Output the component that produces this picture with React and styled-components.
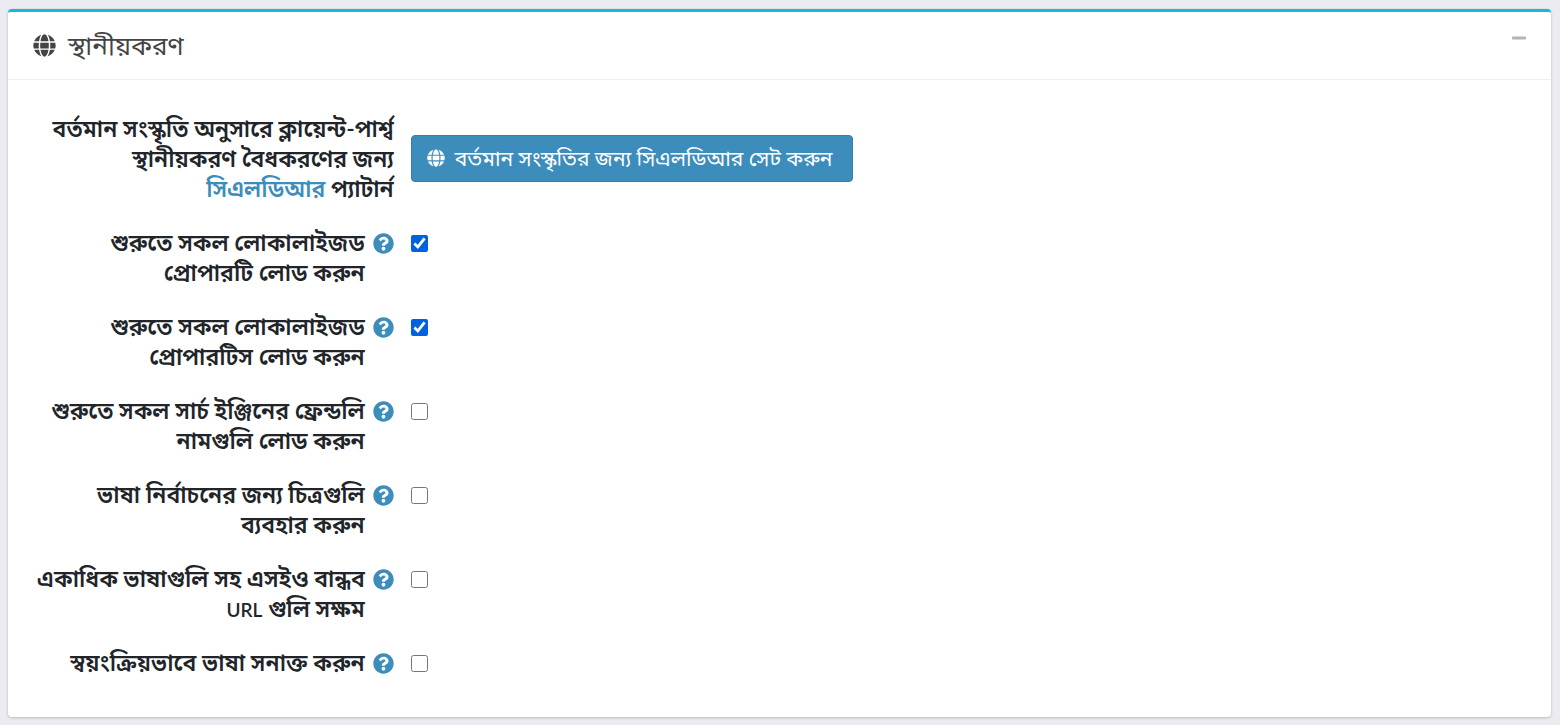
import React from 'react';
import styled, { createGlobalStyle } from 'styled-components';
import { FaGlobe, FaQuestionCircle, FaMinus } from 'react-icons/fa';

const GlobalStyle = createGlobalStyle`
  *, *::before, *::after { box-sizing: border-box; }
  body {
    margin: 0;
    padding: 9px 9px 8px 8px;
    background: #ebecf1;
    color: #212529;
    font: 400 21px/30px Lato, "Noto Sans Bengali", "Noto Sans", sans-serif;
  }
`;

const Card = styled.section`
  background: #fff;
  border-top: 3px solid #17b8dc;
  border-radius: 4px;
  box-shadow: 0 0 1px rgba(0, 0, 0, 0.13), 0 1px 3px rgba(0, 0, 0, 0.2);
`;

const CardHeader = styled.header`
  display: flex;
  justify-content: space-between;
  align-items: flex-start;
  height: 68px;
  padding: 14px 24px 16px 25px;
  border-bottom: 1px solid #f0f0f0;
`;

const CardTitle = styled.h1`
  display: flex;
  align-items: center;
  gap: 12px;
  margin: 0;
  color: #444;
  font-size: 26px;
  line-height: 38px;
  font-weight: 400;
`;

const CollapseButton = styled.button`
  display: flex;
  padding: 4px 0;
  border: 0;
  background: none;
  color: #adb5bd;
  font-size: 16px;
`;

const CardBody = styled.div`
  display: flex;
  flex-direction: column;
  gap: 24px;
  padding: 33px 0 40px;
`;

const Row = styled.div`
  display: grid;
  grid-template-columns: 25% 1fr;
  column-gap: 17px;
  align-items: ${(p) => (p.$center ? 'center' : 'start')};
`;

const LabelCell = styled.div`
  display: flex;
  justify-content: flex-end;
  gap: 8px;
  font-size: 23px;
  font-weight: 600;
  text-align: right;
`;

const Latin = styled.span`
  font-size: 19px;
  line-height: 1;
`;

const Help = styled.span`
  display: flex;
  flex: none;
  padding-top: 6px;
  color: #3c8dbc;
  font-size: 21px;
`;

const Link = styled.a`
  color: #3c8dbc;
  text-decoration: none;
`;

const ActionButton = styled.button`
  display: inline-flex;
  align-items: center;
  gap: 10px;
  height: 47px;
  padding: 0 20px 0 15px;
  border: 1px solid #367fa9;
  border-radius: 4px;
  background: #3c8dbc;
  color: #fff;
  font: inherit;
`;

const Checkbox = styled.input.attrs({ type: 'checkbox' })`
  width: 17px;
  height: 17px;
  margin: 8px 0 0;
  accent-color: #0062e3;
`;

const settings = [
  { id: 'load-property', lines: ['শুরুতে সকল লোকালাইজড', 'প্রোপারটি লোড করুন'], checked: true },
  { id: 'load-properties', lines: ['শুরুতে সকল লোকালাইজড', 'প্রোপারটিস লোড করুন'], checked: true },
  { id: 'load-names', lines: ['শুরুতে সকল সার্চ ইঞ্জিনের ফ্রেন্ডলি', 'নামগুলি লোড করুন'] },
  { id: 'use-images', lines: ['ভাষা নির্বাচনের জন্য চিত্রগুলি', 'ব্যবহার করুন'] },
  { id: 'seo-urls', lines: ['একাধিক ভাষাগুলি সহ এসইও বান্ধব', <><Latin>URL</Latin> গুলি সক্ষম</>] },
  { id: 'detect', lines: ['স্বয়ংক্রিয়ভাবে ভাষা সনাক্ত করুন'] },
];

export default function App() {
  return (
    <>
      <GlobalStyle />
      <Card>
        <CardHeader>
          <CardTitle><FaGlobe size={23} /> স্থানীয়করণ</CardTitle>
          <CollapseButton type="button" aria-label="সংকুচিত করুন"><FaMinus /></CollapseButton>
        </CardHeader>
        <CardBody>
          <Row $center>
            <LabelCell>
              <span>
                বর্তমান সংস্কৃতি অনুসারে ক্লায়েন্ট-পার্শ্ব<br />
                স্থানীয়করণ বৈধকরণের জন্য<br />
                <Link href="#cldr">সিএলডিআর</Link> প্যাটার্ন
              </span>
            </LabelCell>
            <div>
              <ActionButton type="button"><FaGlobe size={18} /> বর্তমান সংস্কৃতির জন্য সিএলডিআর সেট করুন</ActionButton>
            </div>
          </Row>
          {settings.map(({ id, lines, checked }) => (
            <Row key={id}>
              <LabelCell>
                <label htmlFor={id}>
                  {lines.map((line, index) => <div key={index}>{line}</div>)}
                </label>
                <Help><FaQuestionCircle /></Help>
              </LabelCell>
              <Checkbox id={id} defaultChecked={checked} />
            </Row>
          ))}
        </CardBody>
      </Card>
    </>
  );
}
